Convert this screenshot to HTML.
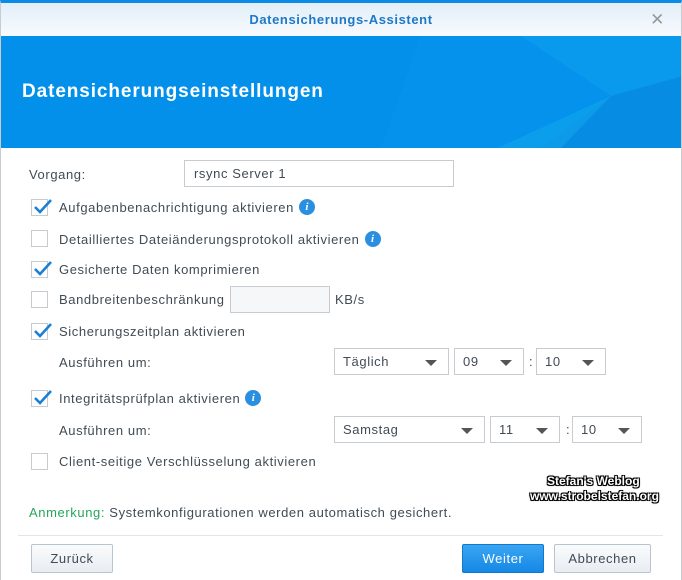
<!DOCTYPE html>
<html><head><meta charset="utf-8"><style>
*{box-sizing:border-box;margin:0;padding:0}
body{width:682px;height:580px;overflow:hidden;background:#fff;font-family:"Liberation Sans",sans-serif;font-size:13px;letter-spacing:0.6px;color:#414b55;position:relative}
.win{position:absolute;left:0;top:0;width:682px;height:580px;border-left:1px solid #c8ccd0;border-right:1px solid #c8ccd0;border-top:3px solid #0a8ce6}
.tb{position:absolute;left:0;right:0;top:0;height:33px;background:linear-gradient(#e2eef8,#f8fbfe);text-align:center;line-height:33px;color:#1e78c8;font-weight:bold;font-size:13px;letter-spacing:0.6px}
.x{position:absolute;right:16px;top:0;color:#999;font-size:17px;font-weight:normal}
.ban{position:absolute;left:0;right:0;top:33px;height:112px;background:#0390eb;overflow:hidden}
.ban h1{position:absolute;left:21px;top:45px;color:#fff;font-size:19px;font-weight:bold;letter-spacing:0.9px}
.a{position:absolute;white-space:nowrap;line-height:16px}
.cb{position:absolute;width:17px;height:17px;border:1px solid #c8ccd0;background:#fff}
.cb svg{position:absolute;left:0;top:-4px}
.inp{position:absolute;border:1px solid #c8ccd0;background:#fff;height:27px;line-height:25px;padding-left:9px}
.sel{position:absolute;border:1px solid #c8ccd0;background:#fff;height:27px;line-height:25px;padding-left:8px}
.sel:after{content:"";position:absolute;right:11px;top:11px;border-left:6px solid transparent;border-right:6px solid transparent;border-top:6px solid #555}
.i{position:absolute;top:-1px;margin-left:5px;width:16px;height:16px;border-radius:50%;background:#2a8fe0;color:#fff;font:italic bold 11px "Liberation Serif",serif;text-align:center;line-height:16px;letter-spacing:0}
.btn{position:absolute;top:544px;height:29px;border:1px solid #b8c4d0;border-radius:2px;background:linear-gradient(#fafbfc,#e8edf2);text-align:center;line-height:27px;color:#414b55}
.wm{position:absolute;left:530px;font:bold 12px "Liberation Sans",sans-serif;color:#fff;letter-spacing:0;text-shadow:-1px -1px 0 #000,1px -1px 0 #000,-1px 1px 0 #000,1px 1px 0 #000,0 0 2px #000}
</style></head><body>
<div class="win">
<div class="tb">Datensicherungs-Assistent<span class="x">✕</span></div>
<div class="ban">
<svg width="682" height="112" style="position:absolute;left:0;top:0">
<polygon points="420,0 682,0 682,112 380,112" fill="#0a98ef" opacity=".35"/>
<polygon points="520,0 682,0 682,40 610,60" fill="#18aaf2" opacity=".35"/>
<polygon points="610,60 682,40 682,112 540,112" fill="#0b86dc" opacity=".45"/>
<polygon points="490,115 610,60 560,112" fill="#19b4f2" opacity=".35"/>
</svg>
<h1>Datensicherungseinstellungen</h1></div>
</div>
<div class="a" style="left:29px;top:167px">Vorgang:</div>
<div class="inp" style="left:184px;top:160px;width:270px">rsync Server 1</div>
<div class="cb" style="left:31px;top:199px"><svg width="22" height="22"><path d="M3 11 L8 16 L19 4" stroke="#1a7fd6" stroke-width="2.6" fill="none"/></svg></div>
<div class="a" style="left:59px;top:200px">Aufgabenbenachrichtigung aktivieren<span class="i">i</span></div>
<div class="cb" style="left:31px;top:230px"></div>
<div class="a" style="left:59px;top:232px">Detailliertes Dateiänderungsprotokoll aktivieren<span class="i">i</span></div>
<div class="cb" style="left:31px;top:261px"><svg width="22" height="22"><path d="M3 11 L8 16 L19 4" stroke="#1a7fd6" stroke-width="2.6" fill="none"/></svg></div>
<div class="a" style="left:59px;top:262px">Gesicherte Daten komprimieren</div>
<div class="cb" style="left:31px;top:291px"></div>
<div class="a" style="left:59px;top:292px">Bandbreitenbeschränkung</div>
<div class="inp" style="left:230px;top:286px;width:100px;background:#f5f7f9"></div>
<div class="a" style="left:335px;top:292px">KB/s</div>
<div class="cb" style="left:31px;top:323px"><svg width="22" height="22"><path d="M3 11 L8 16 L19 4" stroke="#1a7fd6" stroke-width="2.6" fill="none"/></svg></div>
<div class="a" style="left:59px;top:324px">Sicherungszeitplan aktivieren</div>
<div class="a" style="left:59px;top:355px">Ausführen um:</div>
<div class="sel" style="left:334px;top:348px;width:115px">Täglich</div>
<div class="sel" style="left:454px;top:348px;width:70px">09</div>
<div class="a" style="left:529px;top:354px">:</div>
<div class="sel" style="left:536px;top:348px;width:70px">10</div>
<div class="cb" style="left:31px;top:390px"><svg width="22" height="22"><path d="M3 11 L8 16 L19 4" stroke="#1a7fd6" stroke-width="2.6" fill="none"/></svg></div>
<div class="a" style="left:59px;top:391px">Integritätsprüfplan aktivieren<span class="i">i</span></div>
<div class="a" style="left:59px;top:423px">Ausführen um:</div>
<div class="sel" style="left:334px;top:416px;width:151px">Samstag</div>
<div class="sel" style="left:490px;top:416px;width:70px">11</div>
<div class="a" style="left:566px;top:422px">:</div>
<div class="sel" style="left:572px;top:416px;width:70px">10</div>
<div class="cb" style="left:31px;top:453px"></div>
<div class="a" style="left:59px;top:454px">Client-seitige Verschlüsselung aktivieren</div>
<div class="wm" style="top:474px;left:547px">Stefan's Weblog</div>
<div class="wm" style="top:489px">www.strobelstefan.org</div>
<div class="a" style="left:29px;top:505px"><span style="color:#26a65b">Anmerkung:</span> Systemkonfigurationen werden automatisch gesichert.</div>
<div style="position:absolute;left:18px;width:645px;top:535px;height:1px;background:#e3e6e9"></div>
<div class="btn" style="left:31px;width:82px">Zurück</div>
<div class="btn" style="left:462px;width:82px;background:linear-gradient(#3aa5f2,#1588e6);border-color:#1079cc;color:#fff">Weiter</div>
<div class="btn" style="left:554px;width:97px">Abbrechen</div>
</body></html>
